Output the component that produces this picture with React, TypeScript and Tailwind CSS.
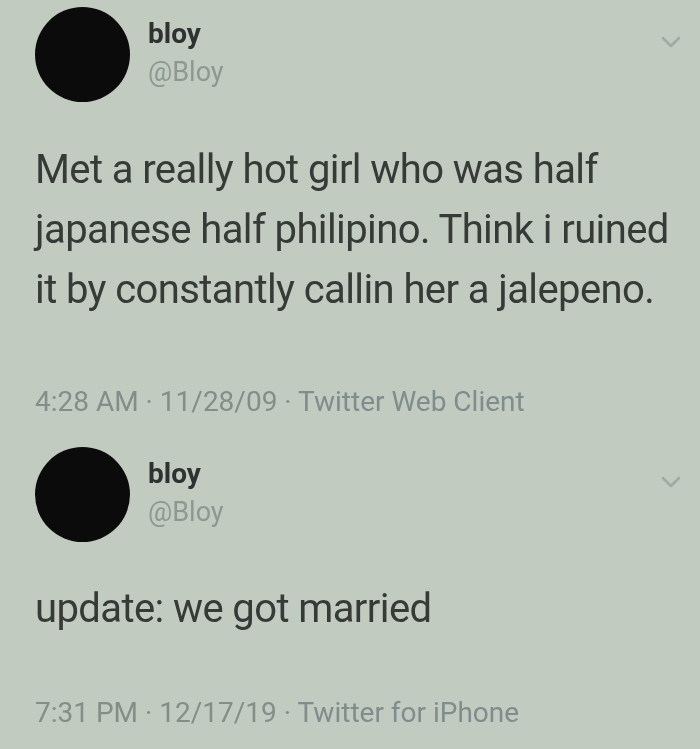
function Chevron() {
  return (
    <svg width="22" height="14" viewBox="0 0 22 14" className="text-[#a0a9a2]">
      <path d="M3 3 L11 11 L19 3" fill="none" stroke="currentColor" strokeWidth="2.5" strokeLinecap="round" strokeLinejoin="round" />
    </svg>
  );
}

function Header() {
  return (
    <div className="flex items-start">
      <div className="w-[95px] h-[95px] rounded-full bg-[#0b0b0b] shrink-0" />
      <div className="ml-[18px] mt-[8px] flex flex-col">
        <span className="text-[28px] leading-[38px] font-bold text-[#2e3230]">bloy</span>
        <span className="text-[27px] leading-[38px] text-[#8f9791]">@Bloy</span>
      </div>
      <div className="ml-auto mt-[28px] mr-[18px]">
        <Chevron />
      </div>
    </div>
  );
}

export default function App() {
  return (
    <div className="w-[700px] h-[749px] bg-[#c2cbc0] font-['Roboto',sans-serif] overflow-hidden pl-[35px] pt-[7px] blur-[0.5px]">
      <Header />
      <p className="mt-[38px] text-[40px] leading-[60px] text-[#363b38] tracking-[-0.6px]">
        Met a really hot girl who was half
        <br />
        japanese half philipino. Think i ruined
        <br />
        it by constantly callin her a jalepeno.
      </p>
      <div className="mt-[67px] text-[28px] leading-[30px] text-[#858d88]">
        4:28 AM · 11/28/09 · <span className="text-[#7f8d8d]">Twitter Web Client</span>
      </div>
      <div className="mt-[30px]">
        <Header />
      </div>
      <p className="mt-[37px] text-[40px] leading-[60px] text-[#363b38] tracking-[-0.6px]">
        update: we got married
      </p>
      <div className="mt-[59px] text-[28px] leading-[30px] text-[#858d88]">
        7:31 PM · 12/17/19 · <span className="text-[#7f8d8d]">Twitter for iPhone</span>
      </div>
    </div>
  );
}
